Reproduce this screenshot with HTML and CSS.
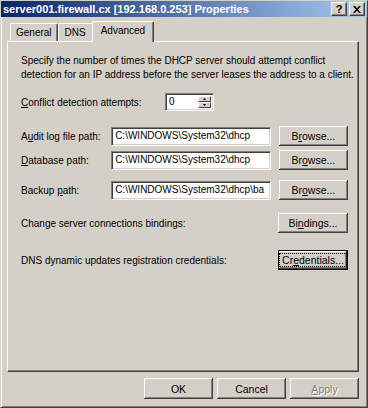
FILE: index.html
```html
<!DOCTYPE html>
<html>
<head>
<meta charset="utf-8">
<link rel="stylesheet" href="styles.css">
</head>
<body>
<div class="window">
  <div class="titlebar">
    <span class="title">server001.firewall.cx [192.168.0.253] Properties</span>
    <div class="tb-buttons">
      <span class="tb-btn">?</span>
      <span class="tb-btn">
        <svg width="8" height="7" viewBox="0 0 8 7"><path d="M0 0h2l2 2.2L6 0h2L5 3.5 8 7H6L4 4.8 2 7H0l3-3.5z" fill="#000"/></svg>
      </span>
    </div>
  </div>
  <div class="client">
    <div class="tabs">
      <div class="tab">General</div>
      <div class="tab">DNS</div>
      <div class="tab active">Advanced</div>
    </div>
    <div class="panel">
      <p class="desc">Specify the number of times the DHCP server should attempt conflict detection for an IP address before the server leases the address to a client.</p>
      <div class="row conflict">
        <label class="lbl"><u>C</u>onflict detection attempts:</label>
        <div class="spin">
          <span class="spin-val">0</span>
          <div class="spin-btns">
            <span class="sb"><svg width="3" height="2" viewBox="0 0 3 2"><path d="M1.5 0L3 2H0z" fill="#000"/></svg></span>
            <span class="sb"><svg width="3" height="2" viewBox="0 0 3 2"><path d="M0 0h3L1.5 2z" fill="#000"/></svg></span>
          </div>
        </div>
      </div>
      <div class="row path audit">
        <label class="lbl">A<u>u</u>dit log file path:</label>
        <div class="field">C:\WINDOWS\System32\dhcp</div>
        <button class="btn">B<u>r</u>owse...</button>
      </div>
      <div class="row path database">
        <label class="lbl"><u>D</u>atabase path:</label>
        <div class="field">C:\WINDOWS\System32\dhcp</div>
        <button class="btn">Br<u>o</u>wse...</button>
      </div>
      <div class="row path backup">
        <label class="lbl">Backup <u>p</u>ath:</label>
        <div class="field">C:\WINDOWS\System32\dhcp\ba</div>
        <button class="btn">Br<u>o</u>wse...</button>
      </div>
      <div class="row wide bind">
        <label class="lbl">Change server connections bindings:</label>
        <button class="btn">Bi<u>n</u>dings...</button>
      </div>
      <div class="row wide cred">
        <label class="lbl">DNS dynamic updates registration credentials:</label>
        <button class="btn default"><span class="focus">Cr<u>e</u>dentials...</span></button>
      </div>
    </div>
    <div class="footer">
      <button class="btn fbtn">OK</button>
      <button class="btn fbtn">Cancel</button>
      <button class="btn fbtn disabled"><u>A</u>pply</button>
    </div>
  </div>
</div>
</body>
</html>
```
FILE: styles.css
```css
* { box-sizing: border-box; }
html, body { margin: 0; padding: 0; }
body {
  width: 368px;
  height: 408px;
  background: #d4d0c8;
  font-family: "Liberation Sans", Arial, sans-serif;
  font-size: 10px;
  color: #000;
  overflow: hidden;
}
.window {
  width: 368px;
  height: 408px;
  background: #d4d0c8;
  border-top: 1px solid #d4d0c8;
  border-left: 1px solid #d4d0c8;
  border-right: 1px solid #404040;
  border-bottom: 1px solid #404040;
  box-shadow: inset 1px 1px 0 #fff, inset -1px -1px 0 #808080;
  padding: 2px;
  display: flex;
  flex-direction: column;
}
.titlebar {
  height: 18px;
  background: linear-gradient(to right, #0a246a, #a6caf0);
  display: flex;
  align-items: center;
  justify-content: space-between;
  padding: 0 2px 0 2px;
  margin: -2px -2px 0 -2px;
}
.title {
  color: #fff;
  font-weight: bold;
  font-size: 11px;
  white-space: nowrap;
}
.tb-buttons { display: flex; gap: 2px; }
.tb-btn {
  width: 16px;
  height: 14px;
  background: #d4d0c8;
  border-top: 1px solid #fff;
  border-left: 1px solid #fff;
  border-right: 1px solid #404040;
  border-bottom: 1px solid #404040;
  box-shadow: inset -1px -1px 0 #808080;
  display: flex;
  align-items: center;
  justify-content: center;
  font-weight: bold;
  font-size: 11px;
  line-height: 1;
}
.client {
  flex: 1;
  padding: 4px 6px 6px 4px;
  display: flex;
  flex-direction: column;
}
.tabs {
  display: flex;
  height: 20px;
  align-items: flex-end;
  padding-left: 3px;
  position: relative;
  z-index: 1;
}
.tab {
  height: 18px;
  padding: 3px 5px 0 5px;
  border-top: 1px solid #fff;
  border-left: 1px solid #fff;
  border-right: 1px solid #404040;
  box-shadow: inset -1px 0 0 #808080;
  border-radius: 2px 2px 0 0;
  font-size: 10px;
  background: #d4d0c8;
}
.tab:nth-child(2) { padding: 3px 7px 0 6px; }
.tab.active {
  height: 21px;
  margin-left: -2px;
  margin-bottom: -1px;
  padding: 3px 8px 0 8px;
}
.panel {
  height: 331px;
  border-top: 1px solid #fff;
  border-left: 1px solid #fff;
  border-right: 1px solid #404040;
  border-bottom: 1px solid #404040;
  box-shadow: inset -1px -1px 0 #808080;
  padding: 12px 10px 0 13px;
  display: flex;
  flex-direction: column;
}
.desc {
  margin: 0;
  line-height: 14px;
  width: 335px;
}
.row {
  display: flex;
  align-items: center;
}
.lbl { white-space: nowrap; }
.conflict { margin-top: 11px; }
.conflict .lbl { width: 144px; }
.spin {
  width: 49px;
  height: 18px;
  background: #fff;
  border-top: 1px solid #808080;
  border-left: 1px solid #808080;
  border-right: 1px solid #fff;
  border-bottom: 1px solid #fff;
  box-shadow: inset 1px 1px 0 #404040, inset -1px -1px 0 #d4d0c8;
  display: flex;
  justify-content: space-between;
  padding: 2px 2px 2px 3px;
}
.spin-val { line-height: 12px; }
.spin-btns {
  width: 13px;
  display: flex;
  flex-direction: column;
}
.sb {
  flex: 1;
  background: #d4d0c8;
  border-top: 1px solid #fff;
  border-left: 1px solid #fff;
  border-right: 1px solid #404040;
  border-bottom: 1px solid #404040;
  display: flex;
  align-items: center;
  justify-content: center;
}
.sb svg { display: block; }
.path { height: 20px; }
.audit { margin-top: 15px; }
.database { margin-top: 4px; }
.backup { margin-top: 10px; }
.path .lbl { width: 91px; }
.field {
  width: 161px;
  height: 19px;
  background: #fff;
  border-top: 1px solid #808080;
  border-left: 1px solid #808080;
  border-right: 1px solid #fff;
  border-bottom: 1px solid #fff;
  box-shadow: inset 1px 1px 0 #404040, inset -1px -1px 0 #d4d0c8;
  padding: 2px 0 0 3px;
  white-space: nowrap;
  overflow: hidden;
  margin-right: 8px;
}
.btn {
  width: 70px;
  height: 20px;
  background: #d4d0c8;
  border: none;
  box-shadow: inset -1px -1px 0 #404040, inset 1px 1px 0 #fff, inset -2px -2px 0 #808080;
  font-family: inherit;
  font-size: 10.5px;
  color: #000;
  padding: 0;
  display: flex;
  align-items: center;
  justify-content: center;
}
.wide { justify-content: space-between; height: 20px; }
.bind { margin-top: 13px; }
.cred { margin-top: 17px; }
.btn.default {
  border: 1px solid #000;
}
.focus {
  outline: 1px dotted #000;
  padding: 0 2px;
}
.footer {
  display: flex;
  justify-content: flex-end;
  gap: 4px;
  margin-top: 6px;
}
.fbtn { width: 69px; height: 21px; }
.fbtn.disabled { color: #808080; text-shadow: 1px 1px 0 #fff; }
```
